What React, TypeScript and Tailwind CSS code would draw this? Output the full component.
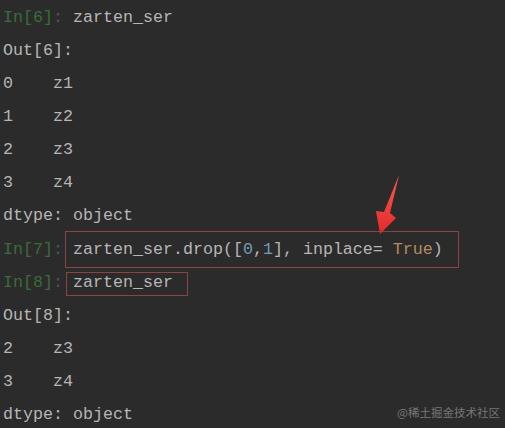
const mono = { fontFamily: '"Liberation Mono", "DejaVu Sans Mono", monospace' }

type Seg = { t: string; c?: string }

const LINES: { prompt?: string; segs: Seg[]; box?: 'drop' | 'ser' }[] = [
  { prompt: 'In[6]', segs: [{ t: 'zarten_ser' }] },
  { segs: [{ t: 'Out[6]:' }] },
  { segs: [{ t: '0    z1' }] },
  { segs: [{ t: '1    z2' }] },
  { segs: [{ t: '2    z3' }] },
  { segs: [{ t: '3    z4' }] },
  { segs: [{ t: 'dtype: object' }] },
  {
    prompt: 'In[7]',
    box: 'drop',
    segs: [
      { t: 'zarten_ser.drop([' },
      { t: '0', c: 'text-[#6f9fb4]' },
      { t: ',' },
      { t: '1', c: 'text-[#6f9fb4]' },
      { t: '], inplace= ' },
      { t: 'True', c: 'text-[#b38a5c]' },
      { t: ')' },
    ],
  },
  { prompt: 'In[8]', box: 'ser', segs: [{ t: 'zarten_ser' }] },
  { segs: [{ t: 'Out[8]:' }] },
  { segs: [{ t: '2    z3' }] },
  { segs: [{ t: '3    z4' }] },
  { segs: [{ t: 'dtype: object' }] },
]

export default function App() {
  return (
    <div className="relative w-[505px] h-[428px] overflow-hidden bg-[#2b2b2b] text-[#b6b6b6]" style={mono}>
      <div className="flex flex-col pl-[3px] pt-[1px] text-[16.67px]">
        {LINES.map((l, i) => (
          <div key={i} className={`relative flex items-center whitespace-pre ${i === 7 ? 'h-[34px]' : 'h-[33px]'}`}>
            {l.prompt && <span className="text-[#3a6b3a]">{l.prompt}</span>}
            {l.prompt && <span className="text-[#555]">: </span>}
            <span>
              {l.segs.map((s, j) => (
                <span key={j} className={s.c}>{s.t}</span>
              ))}
            </span>
            {l.box === 'drop' && (
              <span className="absolute left-[62px] top-[-1px] w-[394px] h-[37px] border border-[#8a4444]" />
            )}
            {l.box === 'ser' && (
              <span className="absolute left-[63px] top-[6px] w-[122px] h-[24px] border border-[#8a4444]" />
            )}
          </div>
        ))}
      </div>

      {/* red arrow */}
      <svg className="absolute left-0 top-0" width="505" height="428" viewBox="0 0 505 428">
        <defs>
          <linearGradient id="ar" x1="0" y1="0" x2="0" y2="1">
            <stop offset="0" stopColor="#ff5a4f" />
            <stop offset="1" stopColor="#e02a2a" />
          </linearGradient>
        </defs>
        <polygon
          points="399,175 390,213 396,218 380,234 376,211 384,212"
          fill="url(#ar)"
        />
      </svg>

      <div
        className="absolute right-[5px] bottom-[7px] text-[11.5px] text-[#777]"
        style={{ fontFamily: '"Noto Sans CJK SC", sans-serif' }}
      >
        @稀土掘金技术社区
      </div>
    </div>
  )
}
